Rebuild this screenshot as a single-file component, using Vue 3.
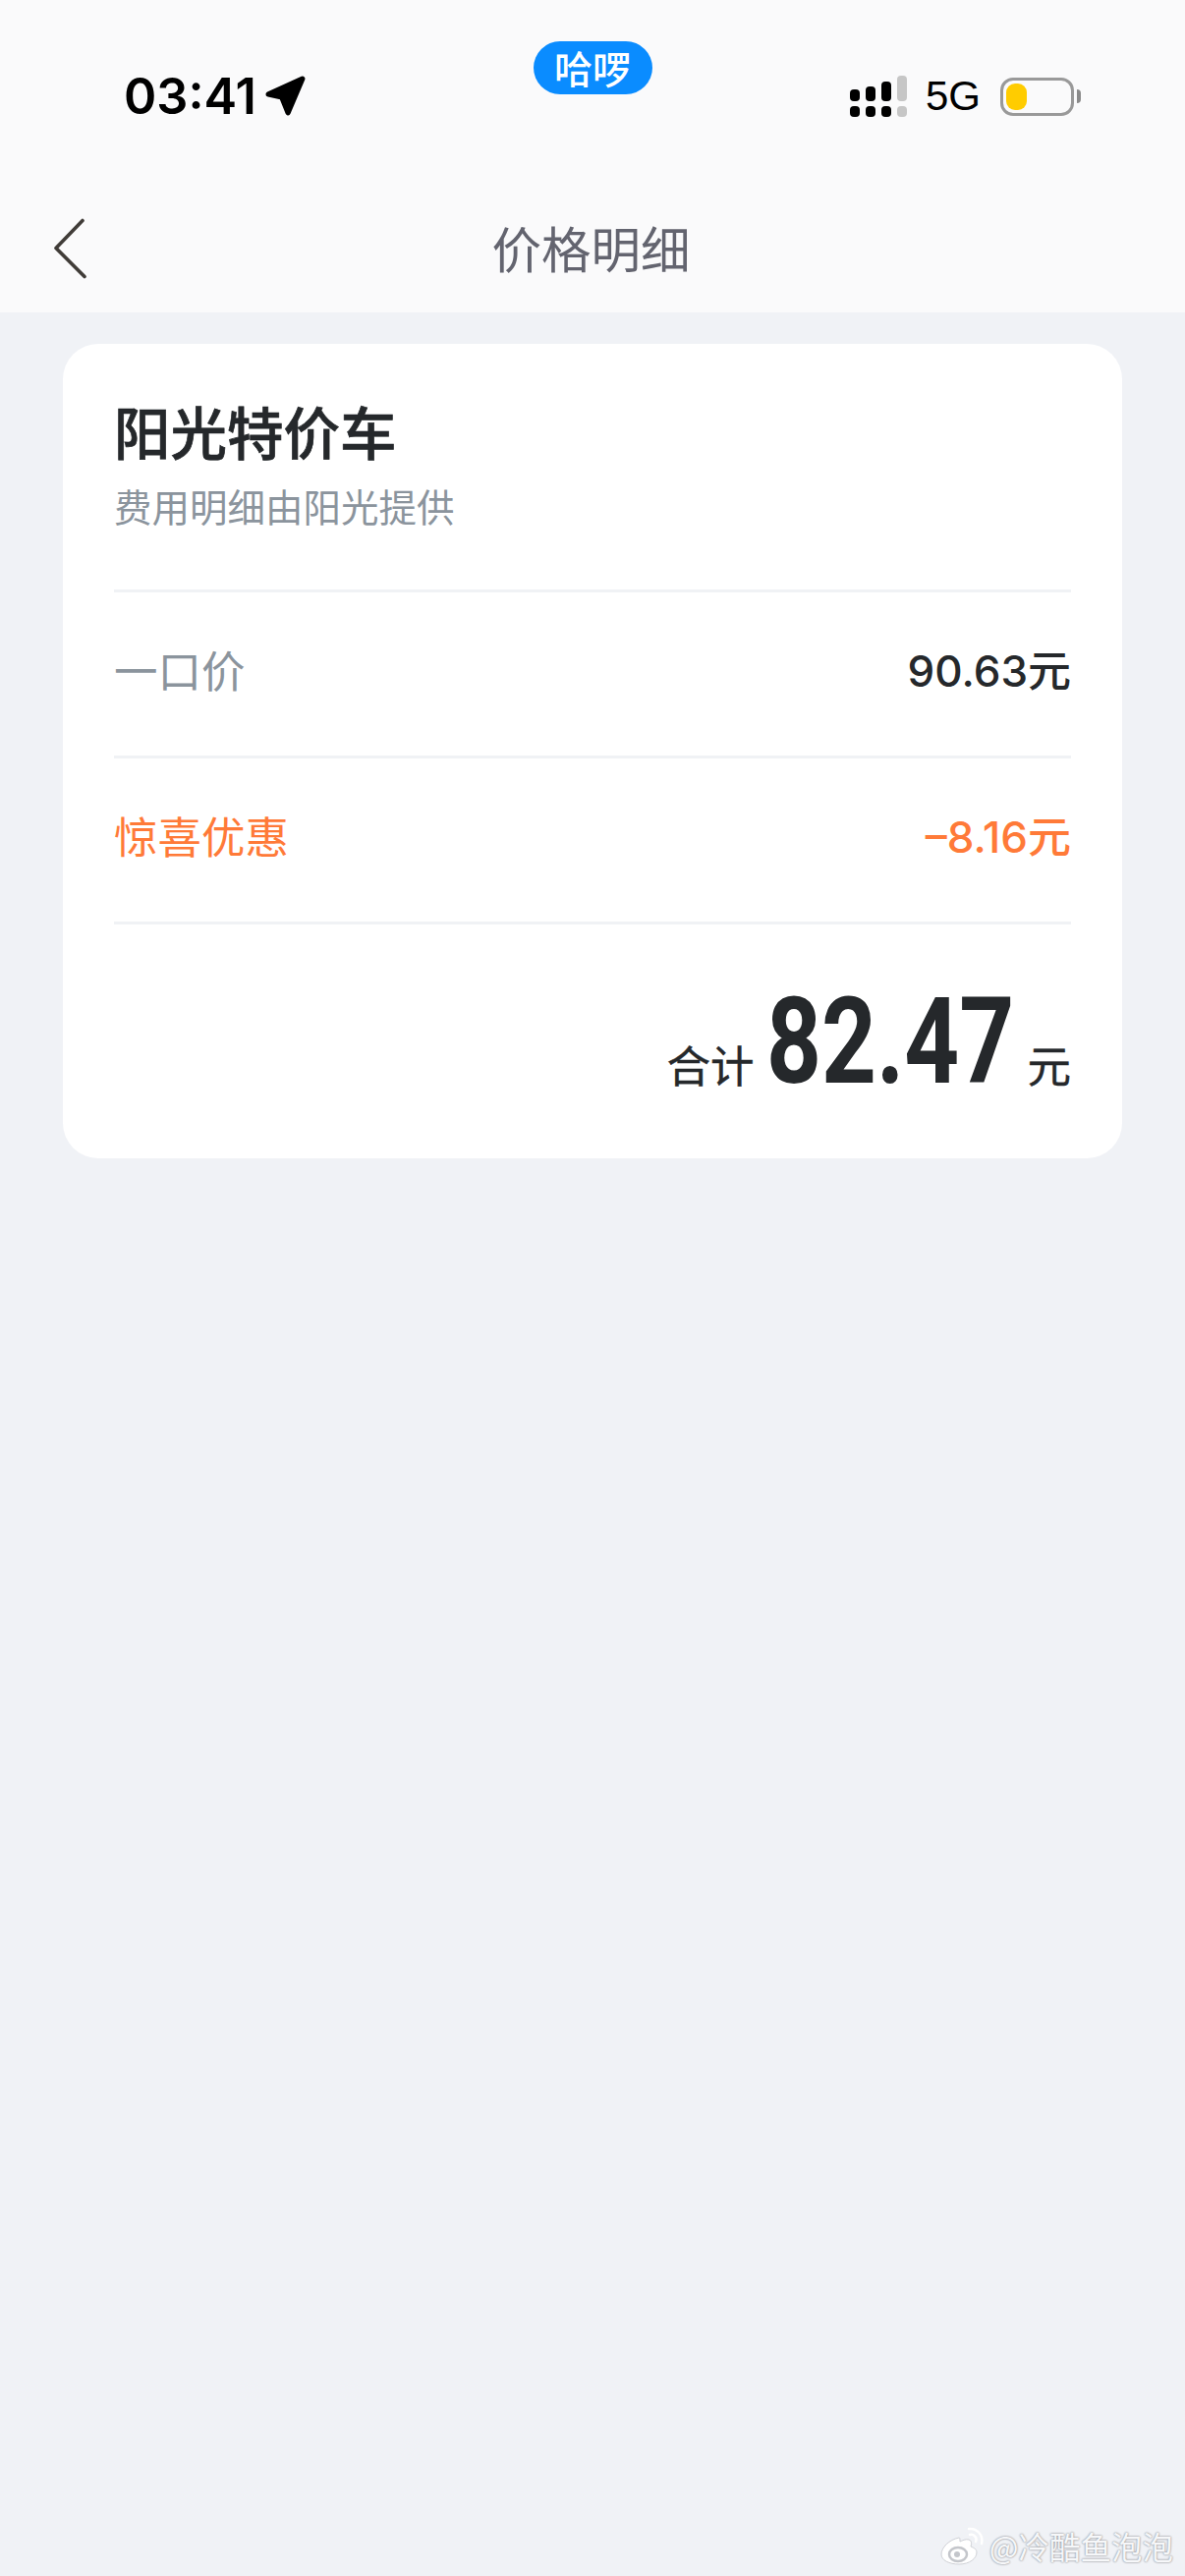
<script setup>
const signal = [
    { top: 12, off: false },
    { top: 15, off: false },
    { top: 20, off: false },
    { top: 26, off: true },
];

const rows = [
    { label: '一口价', value: '90.63元', tone: 'plain' },
    { label: '惊喜优惠', value: '–8.16元', tone: 'promo' },
];
</script>

<template>
    <div class="page">
        <header class="top">
            <div class="status">
                <div class="status-left">
                    <span class="time">03:41</span>
                    <svg class="arrow" viewBox="0 0 40 40" width="42" height="42">
                        <path d="M3 18 L36 3 L22 36 L16 21 Z" fill="#000" stroke="#000" stroke-width="5" stroke-linejoin="round" />
                    </svg>
                </div>
                <div class="pill">哈啰</div>
                <div class="status-right">
                    <div class="signal">
                        <div v-for="(bar, i) in signal" :key="i" class="signal-col" :class="{ off: bar.off }">
                            <i :style="{ height: bar.top + 'px' }"></i>
                            <i class="dot"></i>
                        </div>
                    </div>
                    <span class="net">5G</span>
                    <div class="battery">
                        <div class="battery-body"><div class="battery-fill"></div></div>
                        <div class="battery-nub"></div>
                    </div>
                </div>
            </div>
            <nav class="nav">
                <svg class="back" viewBox="0 0 34 62" width="34" height="62">
                    <path d="M30 2.500 L3 30.500 L32 59.500" fill="none" stroke="#403c38" stroke-width="3.600" stroke-linecap="round" stroke-linejoin="round" />
                </svg>
                <h1 class="nav-title">价格明细</h1>
            </nav>
        </header>

        <main class="content">
            <section class="card">
                <div class="card-head">
                    <h2 class="card-title">阳光特价车</h2>
                    <p class="card-sub">费用明细由阳光提供</p>
                </div>
                <div v-for="row in rows" :key="row.label" class="row" :class="`row--${row.tone}`">
                    <span class="row-label">{{ row.label }}</span>
                    <span class="row-value">{{ row.value }}</span>
                </div>
                <div class="total">
                    <span class="total-text total-label">合计</span>
                    <span class="total-num"><span class="total-digits">82.47</span></span>
                    <span class="total-text">元</span>
                </div>
            </section>
        </main>

        <div class="mark">
            <svg class="mark-logo" viewBox="0 0 46 40" width="46" height="40">
                <path d="M19 12 C9 14 1 22 1 29 C1 35 9 39 19 39 C30 39 37 33 37 27 C37 23 33 22 31 21 C32 18 32 15 29 14 C26 13 22 15 20 16 C20 13 20 12 19 12 Z" fill="#fff" stroke="#cfd1d6" stroke-width="1" />
                <ellipse cx="18" cy="29" rx="9" ry="7" fill="none" stroke="#c4c6cb" stroke-width="2.500" />
                <circle cx="17" cy="29" r="3" fill="#c4c6cb" />
                <path d="M29 3 C37 2 44 9 42 18 M30 9 C34 8 38 12 36 16" fill="none" stroke="#fff" stroke-width="2.500" stroke-linecap="round" />
            </svg>
            <span class="mark-text">@冷酷鱼泡泡</span>
        </div>
    </div>
</template>

<style scoped>
.page {
    position: relative;
    min-height: 2622px;
    background: #f0f2f6;
    font-family: "Noto Sans CJK SC", "Noto Sans", sans-serif;
    overflow: hidden;
}

.top {
    height: 318px;
    background: #fafafb;
}

.status {
    display: grid;
    grid-template-columns: 1fr auto 1fr;
    height: 190px;
    padding: 0 106px;
}

.status-left {
    display: flex;
    align-items: center;
    gap: 9px;
    height: 196px;
    padding-left: 20px;
}

.time {
    font-family: Inter, sans-serif;
    font-weight: 600;
    font-size: 50.500px;
    line-height: 1;
    color: #000;
}

.arrow {
    flex-shrink: 0;
}

.pill {
    align-self: start;
    margin-top: 42px;
    width: 121px;
    height: 54px;
    border-radius: 27px;
    background: #0a8cff;
    color: #fff;
    font-size: 39px;
    font-weight: 500;
    line-height: 52px;
    text-align: center;
}

.status-right {
    display: flex;
    align-items: center;
    justify-content: flex-end;
    height: 196px;
}

.signal {
    display: flex;
    align-items: flex-end;
    gap: 6px;
    margin-right: 19px;
}

.signal-col {
    display: flex;
    flex-direction: column;
    gap: 5px;
    width: 10px;
}

.signal-col i {
    display: block;
    border-radius: 4px;
    background: #000;
}

.signal-col .dot {
    height: 11px;
}

.signal-col.off i {
    background: #c6c6c6;
}

.net {
    font-family: "Liberation Sans", sans-serif;
    font-size: 42px;
    line-height: 1;
    color: #000;
    margin-right: 20px;
}

.battery {
    display: flex;
    align-items: center;
    gap: 3px;
}

.battery-body {
    box-sizing: border-box;
    width: 75px;
    height: 39px;
    padding: 3px;
    border: 3px solid #999;
    border-radius: 13px;
}

.battery-fill {
    width: 21px;
    height: 100%;
    border-radius: 9px;
    background: #ffcc00;
}

.battery-nub {
    width: 4px;
    height: 14px;
    border-radius: 0 7px 7px 0;
    background: #8a8a8a;
}

.nav {
    position: relative;
    display: flex;
    align-items: center;
    justify-content: center;
    height: 122px;
    padding-right: 3px;
    box-sizing: border-box;
}

.back {
    position: absolute;
    left: 54px;
    top: 32px;
}

.nav-title {
    margin: 0;
    font-size: 50.500px;
    font-weight: 400;
    line-height: 1;
    color: #63646f;
}

.content {
    padding: 32px 64px 0;
}

.card {
    box-sizing: border-box;
    height: 829px;
    padding: 0 52px;
    background: #fff;
    border-radius: 36px;
}

.card-head {
    height: 253px;
    box-sizing: border-box;
    padding-top: 50px;
    border-bottom: 3px solid #f0f2f5;
}

.card-title {
    margin: 0;
    font-size: 57.500px;
    font-weight: 500;
    line-height: 76px;
    color: #25282b;
    -webkit-text-stroke: 0.7px #25282b;
}

.card-sub {
    margin: 13px 0 0;
    font-size: 38.500px;
    font-weight: 400;
    line-height: 50px;
    color: #8b949d;
}

.row {
    display: flex;
    align-items: center;
    justify-content: space-between;
    height: 169px;
    box-sizing: border-box;
    padding-bottom: 12px;
    border-bottom: 3px solid #f0f2f5;
}

.row-label {
    font-size: 44.500px;
    color: #8b949d;
}

.row-value {
    font-family: Inter, "Noto Sans CJK SC", sans-serif;
    font-size: 44px;
    font-weight: 500;
    color: #25282b;
}

.row--promo .row-label,
.row--promo .row-value {
    color: #ff7a38;
}

.total {
    display: flex;
    align-items: baseline;
    justify-content: flex-end;
    gap: 15px;
    padding-top: 53px;
}

.total-text {
    font-size: 44.500px;
    font-weight: 400;
    color: #25282b;
    -webkit-text-stroke: 0.4px #25282b;
}

.total-label {
    margin-right: -2px;
}

.total-num {
    display: inline-block;
    width: 250px;
    font-family: Roboto, "Liberation Sans", sans-serif;
    font-size: 122px;
    font-weight: 700;
    line-height: 1.1;
    color: #25282b;
}

/* no condensed bold installed, so squeeze the digits to the DIN-like width */
.total-digits {
    display: inline-block;
    transform: scaleX(0.8);
    transform-origin: left center;
}

.mark {
    position: absolute;
    right: 12px;
    top: 2569px;
    display: flex;
    align-items: center;
    gap: 4px;
}

.mark-text {
    font-size: 31.500px;
    line-height: 44px;
    color: #f6f7f9;
    text-shadow: 0 0 2px #8f9196, 0 0 2px #a9abb0;
}
</style>

<style>
html,
body {
    margin: 0;
    background: #f0f2f6;
}
</style>
